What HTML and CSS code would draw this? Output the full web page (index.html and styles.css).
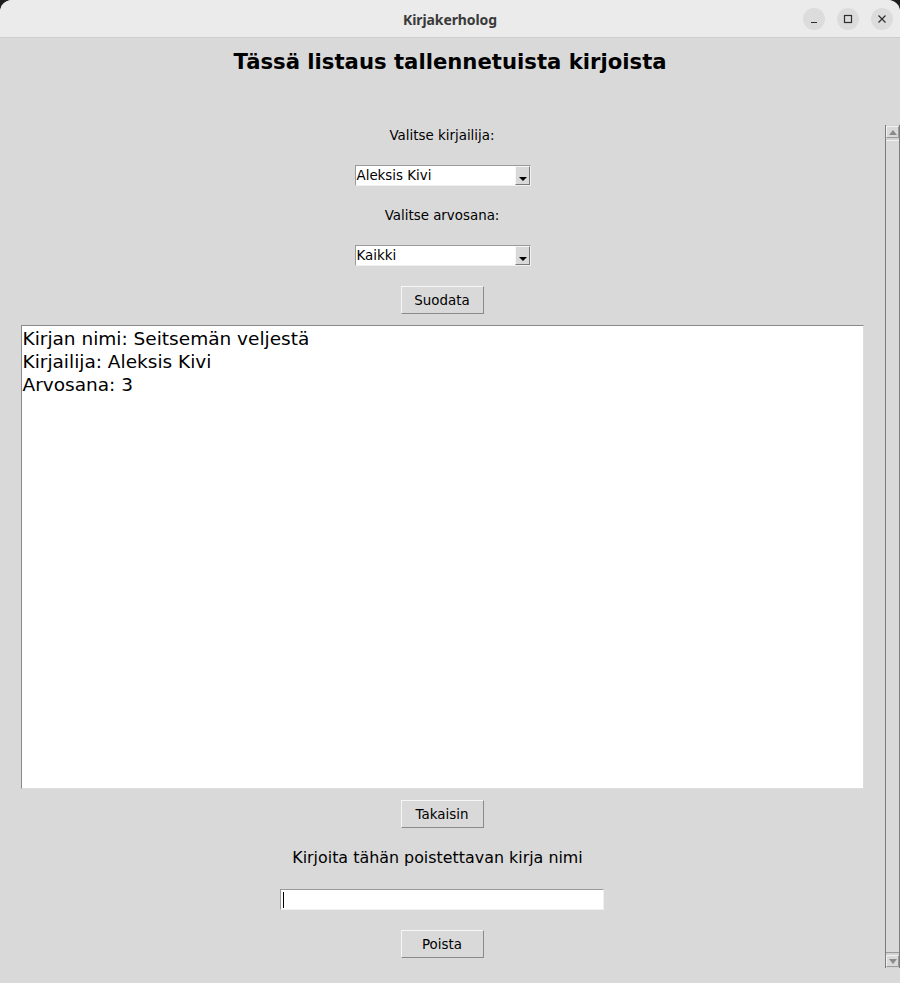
FILE: index.html
```
<!DOCTYPE html>
<html lang="fi">
<head>
<meta charset="utf-8">
<title>Kirjakerholog</title>
<link rel="stylesheet" href="styles.css">
</head>
<body>
<div class="window">
  <header class="titlebar">
    <span class="title">Kirjakerholog</span>
    <div class="controls">
      <span class="ctl"><svg width="10" height="10" viewBox="0 0 10 10"><path d="M2 8.5h6" stroke="#2e2e2e" stroke-width="1.2"/></svg></span>
      <span class="ctl"><svg width="10" height="10" viewBox="0 0 10 10"><rect x="1.5" y="1.5" width="7" height="7" fill="none" stroke="#2e2e2e" stroke-width="1.2"/></svg></span>
      <span class="ctl"><svg width="10" height="10" viewBox="0 0 10 10"><path d="M1.5 1.5l7 7M8.5 1.5l-7 7" stroke="#2e2e2e" stroke-width="1.2"/></svg></span>
    </div>
  </header>
  <div class="content">
    <h1 class="heading">Tässä listaus tallennetuista kirjoista</h1>
    <div class="scrollarea">
      <div class="canvas">
        <div class="label lbl-first">Valitse kirjailija:</div>
        <div class="combo combo-first">
          <span class="combo-value">Aleksis Kivi</span>
          <span class="combo-arrow"><span class="tri"></span></span>
        </div>
        <div class="label lbl-second">Valitse arvosana:</div>
        <div class="combo combo-second">
          <span class="combo-value">Kaikki</span>
          <span class="combo-arrow"><span class="tri"></span></span>
        </div>
        <button class="btn btn-filter">Suodata</button>
        <div class="textbox">Kirjan nimi: Seitsemän veljestä
Kirjailija: Aleksis Kivi
Arvosana: 3</div>
        <button class="btn btn-back">Takaisin</button>
        <div class="label-big">Kirjoita tähän poistettavan kirja nimi</div>
        <div class="entry"><span class="cursor"></span></div>
        <button class="btn btn-delete">Poista</button>
      </div>
      <div class="scrollbar">
        <span class="sb-btn"><span class="sb-up"></span></span>
        <span class="sb-trough"></span>
        <span class="sb-btn"><span class="sb-down"></span></span>
      </div>
    </div>
  </div>
</div>
</body>
</html>
```
FILE: styles.css
```
* { box-sizing: border-box; }
html, body { margin: 0; padding: 0; background: #1e1e1e; }
body { width: 900px; height: 983px; overflow: hidden; font-family: "DejaVu Sans", sans-serif; }
.window {
  width: 900px; height: 983px;
  background: #d9d9d9;
  border-radius: 12px 12px 0 0;
  overflow: hidden;
  display: flex; flex-direction: column;
}
.titlebar {
  height: 38px; flex: none;
  background: #ebebeb;
  border-bottom: 1px solid #cdcdcd;
  display: flex; align-items: center; justify-content: center;
  position: relative;
  padding-top: 2px;
}
.title { font-family: "Noto Sans", "DejaVu Sans", sans-serif; font-weight: 700; font-size: 14px; color: #3a3a3a; letter-spacing: -0.1px; }
.controls { position: absolute; right: 7px; top: 8px; display: flex; gap: 12px; }
.ctl { width: 22px; height: 22px; border-radius: 50%; background: #dcdcdc; display: flex; align-items: center; justify-content: center; }
.content { flex: 1; display: flex; flex-direction: column; }
.heading { margin: 0; height: 87px; padding-top: 11px; text-align: center; font-size: 21.2px; font-weight: 700; color: #000; line-height: 26px; }
.scrollarea { display: flex; height: 843px; }
.canvas { width: 885px; display: flex; flex-direction: column; align-items: center; padding-top: 3px; }
.label { font-size: 13.4px; line-height: 16px; color: #000; margin-left: -1px; }
.lbl-first { margin-bottom: -1px; }
.lbl-second { margin-top: 22px; margin-bottom: -1px; }
.combo {
  width: 176px; height: 21px; margin-top: 22px;
  background: #fff;
  border: 1px solid; border-color: #9a9a9a #f0f0f0 #f0f0f0 #9a9a9a;
  display: flex; align-items: stretch;
}
.combo-value { flex: 1; font-size: 13.4px; line-height: 19px; padding-left: 1px; color: #000; }
.combo-arrow {
  width: 15px; background: #d9d9d9;
  border: 1px solid; border-color: #f6f6f6 #7a7a7a #7a7a7a #f6f6f6;
  position: relative;
}
.tri { position: absolute; left: 3px; bottom: 3px; width: 0; height: 0; border-left: 4px solid transparent; border-right: 4px solid transparent; border-top: 4px solid #000; }
.btn {
  font-family: "DejaVu Sans", sans-serif; font-size: 13.4px; color: #000;
  width: 83px; height: 28px; padding: 0;
  background: #d9d9d9;
  border: 1px solid; border-color: #f6f6f6 #8a8a8a #8a8a8a #f6f6f6;
  margin-left: -1px;
}
.btn-filter { margin-top: 20px; }
.textbox {
  width: 843px; height: 464px; margin-top: 11px; margin-left: -1px;
  background: #fff;
  border: 1px solid; border-color: #8a8a8a #dcdcdc #dcdcdc #8a8a8a;
  white-space: pre; font-size: 18.5px; line-height: 23px; padding: 1px 0 0 1px; color: #000;
}
.btn-back { margin-top: 11px; }
.label-big { font-size: 15.9px; line-height: 19px; margin-top: 20px; margin-left: -10px; color: #000; }
.entry {
  width: 324px; height: 21px; margin-top: 22px; margin-left: -1px;
  background: #fff;
  border: 1px solid; border-color: #9a9a9a #f0f0f0 #f0f0f0 #9a9a9a;
  padding: 2px 0 0 2px;
}
.cursor { display: block; width: 1px; height: 16px; background: #000; }
.btn-delete { margin-top: 20px; }
.scrollbar {
  width: 15px; height: 843px; display: flex; flex-direction: column;
  border-left: 1px solid #7c7c7c; border-right: 1px solid #7c7c7c;
  background: #d2d2d2;
  padding: 1px 0;
}
.sb-btn { height: 12px; flex: none; background: #d9d9d9; border: 1px solid; border-color: #f2f2f2 #9a9a9a #9a9a9a #f2f2f2; display: flex; align-items: center; justify-content: center; }
.sb-trough { flex: 1; border-top: 1px solid #f2f2f2; border-bottom: 1px solid #9a9a9a; margin: 2px 0; background: #d9d9d9; }
.sb-up { width: 0; height: 0; border-left: 4px solid transparent; border-right: 4px solid transparent; border-bottom: 5px solid #8a8a8a; }
.sb-down { width: 0; height: 0; border-left: 4px solid transparent; border-right: 4px solid transparent; border-top: 5px solid #8a8a8a; }
```
